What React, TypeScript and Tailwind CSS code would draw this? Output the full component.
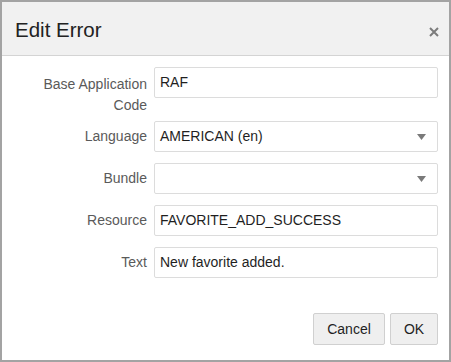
import React from "react";

const Caret = () => (
    <svg width="9" height="6" viewBox="0 0 9 6" className="shrink-0">
        <path d="M0 0 L9 0 L4.5 6 Z" fill="#7a7a7a" />
    </svg>
);

const TextField = ({ value }: { value: string }) => (
    <div className="flex h-[31px] w-[284px] items-center rounded-[2px] border border-[#dcdcdc] bg-white pl-[5px] text-[14px] text-[#1f1f1f]">
        {value}
    </div>
);

const SelectField = ({ value }: { value: string }) => (
    <div className="flex h-[31px] w-[284px] items-center justify-between rounded-[2px] border border-[#dcdcdc] bg-white pl-[5px] pr-[11px] text-[14px] text-[#1f1f1f]">
        <span>{value}</span>
        <Caret />
    </div>
);

const Row = ({ label, children, className = "" }: { label: React.ReactNode; children: React.ReactNode; className?: string }) => (
    <div className={"flex items-start gap-[7px] " + className}>
        <div className="w-[145px] text-right text-[14px] text-[#5a5a5a] leading-[31px]">{label}</div>
        {children}
    </div>
);

export default function App() {
    return (
        <div
            className="flex h-[362px] w-[451px] flex-col border-2 border-[#a3a3a3] bg-white"
            style={{ fontFamily: '"Liberation Sans", Arial, sans-serif' }}
        >
            {/* header */}
            <div className="flex h-[54px] items-center justify-between border-b border-[#d4d4d4] bg-[#f1f1f1] pl-[13px] pr-[10px]">
                <h2 className="pt-[3px] text-[20.5px] text-[#222]">Edit Error</h2>
                <svg width="10" height="10" viewBox="0 0 10 10" className="mt-[6px]">
                    <path d="M1 1 L9 9 M9 1 L1 9" stroke="#7c7c7c" strokeWidth="2" />
                </svg>
            </div>

            {/* form */}
            <div className="flex flex-col pt-[11px]">
                <Row label={<span className="block pt-[7px] leading-[21px]">Base Application<br />Code</span>}>
                    <TextField value="RAF" />
                </Row>
                <Row label="Language" className="mt-[5px]">
                    <SelectField value="AMERICAN (en)" />
                </Row>
                <Row label="Bundle" className="mt-[11px]">
                    <SelectField value="" />
                </Row>
                <Row label="Resource" className="mt-[11px]">
                    <TextField value="FAVORITE_ADD_SUCCESS" />
                </Row>
                <Row label="Text" className="mt-[11px]">
                    <TextField value="New favorite added." />
                </Row>
            </div>

            {/* footer */}
            <div className="mt-auto mb-[15px] flex justify-end gap-[5px] pr-[11px]">
                <button className="h-[32px] w-[72px] rounded-[2px] border border-[#d0d0d0] bg-[#efefef] text-[14px] text-[#1f1f1f]">
                    Cancel
                </button>
                <button className="h-[32px] w-[48px] rounded-[2px] border border-[#d0d0d0] bg-[#efefef] text-[14px] text-[#1f1f1f]">
                    OK
                </button>
            </div>
        </div>
    );
}
